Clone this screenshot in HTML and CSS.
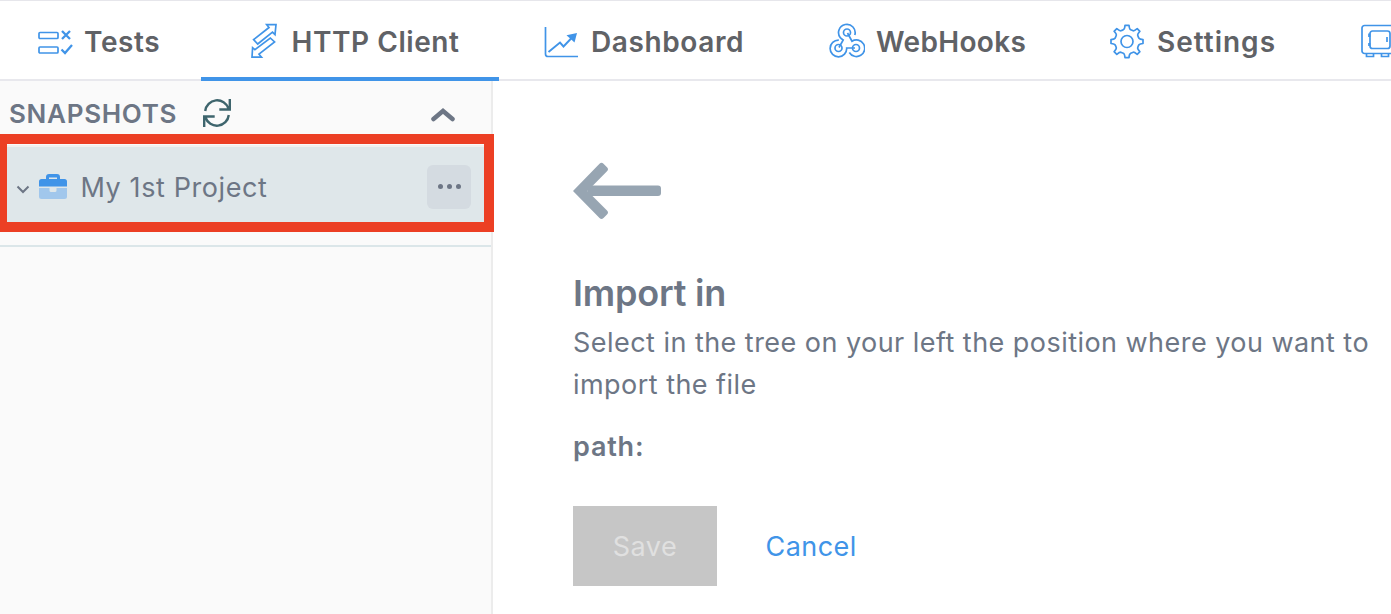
FILE: index.html
```html
<!DOCTYPE html>
<html lang="en">
<head>
<meta charset="utf-8">
<title>HTTP Client</title>
<link rel="stylesheet" href="styles.css">
</head>
<body>
<nav class="tabs">
  <a class="tab tab-tests">
    <svg class="tab-icon" viewBox="0 0 36 36"><rect x="2" y="9.500" width="19" height="6" rx="1"/><rect x="2" y="24" width="19" height="6" rx="1"/><path class="bold" d="M25 8l8 8M33 8l-8 8M24.500 26.500l3.500 3.500 7-8"/></svg>
    <span class="tab-label">Tests</span>
  </a>
  <a class="tab tab-http active">
    <svg class="tab-icon" viewBox="0 0 36 36"><path d="M16.700 1.700h9.300L25 11.700l-2.500-2.500L7.700 21 3.600 16.700 19 4.500zM11.500 34.200H2l.6-9.500 2.300 2L20.300 15l4.300 4L9 31.200z"/></svg>
    <span class="tab-label">HTTP Client</span>
  </a>
  <a class="tab tab-dashboard">
    <svg class="tab-icon" viewBox="0 0 36 36"><path d="M2.500 4v27q0 2.500 2.500 2.500h30"/><path class="bold thin" d="M5.500 29L17 19.500l3.500 4 9.500-10"/><path class="solid" d="M23.500 12.300L34 10l-2.500 9.500z"/></svg>
    <span class="tab-label">Dashboard</span>
  </a>
  <a class="tab tab-webhooks">
    <svg class="tab-icon" viewBox="0 0 36 36"><circle cx="18" cy="9.500" r="3.500"/><circle cx="9.500" cy="25" r="3.500"/><circle cx="27" cy="25" r="3.500"/><path d="M11.500 15A8.300 8.300 0 1 1 25.800 12M18.500 10l4.500 8.200A8.300 8.300 0 1 1 20.300 29.500M10 24.500l4.200-7.500-2.700-2M9.800 17.200A8.300 8.300 0 1 0 17.700 25H26"/></svg>
    <span class="tab-label">WebHooks</span>
  </a>
  <a class="tab tab-settings">
    <svg class="tab-icon" viewBox="0 0 36 36"><circle cx="18" cy="18.500" r="6"/><path stroke-linejoin="round" d="M16 2.300h4q.3 4 1.700 4.500t2.500 1q1 .3 4-2.200l2.700 2.700q-2.500 3-2.200 4t1 2.500 4.300 1.700v4q-3.700.3-4.300 1.700t-1 2.500 2.200 4l-2.700 2.700q-3-2.500-4-2.200t-2.500 1T20 34.700h-4q-.3-4-1.700-4.500t-2.500-1q-1-.3-4 2.200l-2.700-2.700q2.500-3 2.200-4t-1-2.500T2 20.500v-4q3.700-.3 4.300-1.700t1-2.500-2.200-4l2.700-2.700q3 2.500 4 2.200t2.500-1T16 2.300z"/></svg>
    <span class="tab-label">Settings</span>
  </a>
  <a class="tab tab-vault">
    <svg class="tab-icon" viewBox="0 0 36 36"><rect x="2" y="2.500" width="36" height="28" rx="2.500"/><rect x="10" y="8" width="20" height="17.500" rx="2.500"/><path d="M6.500 30.500v3h7v-3M21.500 30.500v3h7v-3M27 14v5"/><path class="bold" d="M9.300 10.500V14M9.300 20v3"/></svg>
  </a>
</nav>
<div class="workspace">
  <aside class="sidebar">
    <header class="sidebar-head">
      <h2 class="sidebar-title">SNAPSHOTS</h2>
      <svg class="refresh" viewBox="0 0 30 30"><path d="M3.200 13A12 12 0 0 1 26.500 10.500M26.800 17A12 12 0 0 1 3.500 19.500M27.800 1v10.500H17.300M2.200 29V18.500h10.500"/></svg>
      <svg class="collapse" viewBox="0 0 24 14"><path d="M2.500 11L12 3l9.500 8"/></svg>
    </header>
    <div class="project-slot">
      <div class="project">
        <svg class="expand" viewBox="0 0 14 9"><path d="M1.500 1.500L7 7l5.500-5.500"/></svg>
        <svg class="briefcase" viewBox="0 0 28 26"><path class="case-bottom" d="M0 14h10.500v2.500q0 1.500 1.500 1.500h4q1.500 0 1.500-1.500V14H28v8.500q0 2.500-2.500 2.500h-23Q0 25 0 22.500z"/><path class="case-top" fill-rule="evenodd" d="M7 5V3q0-3 3-3h8q3 0 3 3v2h4.500Q28 5 28 7.500v5H0v-5Q0 5 2.500 5zM10 5h8V3.500h-8z"/></svg>
        <span class="project-name">My 1st Project</span>
        <button class="more" aria-label="More"><i class="dot"></i><i class="dot"></i><i class="dot"></i></button>
      </div>
      <div class="highlight"></div>
    </div>
  </aside>
  <main class="content">
    <svg class="back" viewBox="0 0 88 58"><path class="shaft" d="M15 23.500h70q3 0 3 3v4.500q0 3-3 3H15z"/><path class="shaft" d="M0 29L26.500 1.800q2-2 4 0l3.500 3.500q2 2 0 4L14.500 29 34 48.500q2 2 0 4L30.500 56q-2 2-4 0z"/></svg>
    <h1 class="title">Import in</h1>
    <p class="description">Select in the tree on your left the position where you want to<br>import the file</p>
    <p class="path">path:</p>
    <div class="actions">
      <button class="save" disabled>Save</button>
      <a class="cancel">Cancel</a>
    </div>
  </main>
</div>
</body>
</html>
```

FILE: styles.css
```css
* { box-sizing: border-box; }
body {
  margin: 0;
  height: 614px;
  overflow: hidden;
  background: #fff;
  color: #6d7685;
  font: 400 27px/42px Inter, "Liberation Sans", sans-serif;
  letter-spacing: .46px;
}
svg { display: block; flex: none; fill: none; }
h1, h2, p { margin: 0; }
button { border: 0; padding: 0; font: inherit; letter-spacing: inherit; }

.tabs {
  display: flex;
  height: 81px;
  border-top: 1px solid #e6e6eb;
  border-bottom: 2px solid #e8e8ed;
}
.tab {
  display: flex;
  flex: none;
  align-items: center;
  height: 80px;
  color: #606266;
  font-size: 28px;
  font-weight: 600;
  white-space: nowrap;
}
.tab-icon { width: 36px; height: 36px; stroke: #4094e8; stroke-width: 1.7; }
.tab-icon .bold { stroke-width: 2.3; }
.tab-icon .thin { stroke-width: 1.9; }
.tab-icon .solid { fill: #4094e8; stroke: none; }
.tab-label { padding-top: 1px; margin-left: 11px; letter-spacing: .6px; }
.tab-tests { width: 201px; padding-left: 37px; }
.tab-http { width: 298px; padding-left: 49px; }
.tab-http .tab-label { margin-left: 5.5px; letter-spacing: .55px; }
.tab-dashboard { width: 286px; padding-left: 44px; }
.tab-dashboard .tab-label { margin-left: 12px; }
.tab-webhooks { width: 282px; padding-left: 44px; }
.tab-webhooks .tab-label { letter-spacing: .35px; }
.tab-settings { width: 250px; padding-left: 42px; }
.tab-settings .tab-label { margin-left: 12px; letter-spacing: 1px; }
.tab-vault { width: 74px; padding-left: 43px; }
.tab-vault .tab-icon { overflow: visible; }
.active { border-bottom: 4px solid #4094e8; padding-top: 4px; }

.workspace { display: flex; height: 533px; }
.sidebar {
  flex: none;
  width: 493px;
  background: #fafafa;
  border-right: 2px solid #ececec;
}
.sidebar-head { display: flex; align-items: center; height: 64px; padding: 0 0 1px 9px; }
.sidebar-title {
  width: 193px;
  padding-top: 2px;
  font-size: 26px;
  font-weight: 600;
  line-height: 32px;
  letter-spacing: .7px;
}
.refresh { width: 30px; height: 30px; stroke: #3e656d; stroke-width: 2.4; }
.collapse { width: 24px; height: 14px; margin: 4px 36px 0 auto; stroke: #6d7685; stroke-width: 4.5; stroke-linecap: round; }
.project-slot { position: relative; height: 102px; border-bottom: 2px solid #dbe6e9; }
.project {
  display: flex;
  align-items: center;
  height: 78px;
  padding: 4px 20px 0 16px;
  background: #dfe7ea;
  border-top: 2px solid #f2f0ee;
}
.expand { width: 14px; height: 9px; margin-top: 4px; stroke: #6d7685; stroke-width: 2; }
.briefcase { width: 28px; height: 26px; margin-left: 9px; }
.case-top { fill: #4094e8; }
.case-bottom { fill: #a1c7ec; }
.project-name { margin-left: 13.5px; padding-top: 1px; letter-spacing: .6px; }
.more {
  display: flex;
  align-items: center;
  justify-content: center;
  gap: 4px;
  width: 44px;
  height: 44px;
  margin-left: auto;
  padding-bottom: 1px;
  border-radius: 6px;
  background: #d4dbe1;
}
.dot { width: 5px; height: 5px; border-radius: 50%; background: #6d7685; }
.highlight {
  position: absolute;
  top: -11px;
  left: 0;
  width: 494px;
  height: 98px;
  border: 10px solid #ec3f24;
  border-left-width: 7px;
}

.content { flex: 1; padding: 81px 0 0 80px; white-space: nowrap; }
.back { width: 88px; height: 58px; }
.shaft { fill: #97a5b2; }
.title { margin-top: 52px; font-size: 36px; line-height: 42px; font-weight: 600; letter-spacing: -.2px; }
.description { margin-top: 8px; }
.path { margin-top: 20px; font-weight: 600; letter-spacing: .8px; }
.actions { display: flex; align-items: center; margin-top: 38px; }
.save { width: 144px; height: 80px; padding-top: 1px; background: #c6c6c6; color: #e0e0e0; }
.cancel { margin-left: 48.5px; padding-top: 1px; color: #4094e8; }
```
